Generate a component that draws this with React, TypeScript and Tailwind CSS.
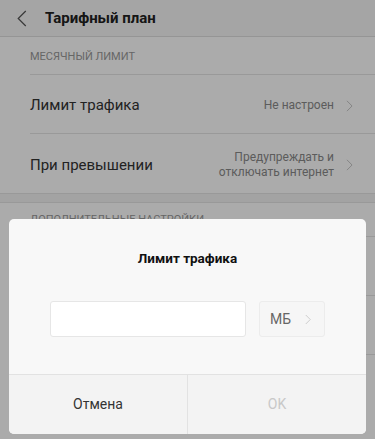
import React from 'react';

function ChevronRight({ className }: { className?: string }) {
  return (
    <svg viewBox="0 0 8 14" className={className} fill="none" stroke="currentColor" strokeWidth="1.1">
      <path d="M1 1l6 6-6 6" />
    </svg>
  );
}

function SettingRow({ label, value, last }: { label: string; value: React.ReactNode; last?: boolean }) {
  return (
    <div className={last ? 'flex h-[59px] items-center pr-[22px] pt-[3px]' : 'flex h-[59px] items-center border-b border-[#e4e4e4] pr-[22px] pt-[3px]'}>
      <span className="flex-1 text-[15px] text-[#333]">{label}</span>
      <span className="text-right text-[12px] leading-[15px] text-[#8a8a8a]">{value}</span>
      <ChevronRight className="ml-[12px] h-[12px] w-[7px] text-[#c4c4c4]" />
    </div>
  );
}

export default function App() {
  return (
    <div
      className="relative h-[439px] w-[375px] overflow-hidden bg-white"
      style={{ fontFamily: 'Roboto, "Noto Sans", sans-serif' }}
    >
      {/* page behind the dialog */}
      <div className="flex h-[37px] items-center border-b border-[#dedede] bg-[#f7f7f7]">
        <svg viewBox="0 0 10 18" className="ml-[17px] h-[17px] w-[10px] text-[#555]" fill="none" stroke="currentColor" strokeWidth="1.3">
          <path d="M9 1L1 9l8 8" />
        </svg>
        <span className="ml-[18px] text-[15px] font-bold text-[#222]">Тарифный план</span>
      </div>

      <div className="pl-[30px]">
        <div className="flex h-[38px] items-end border-b border-[#e4e4e4] pb-[9px] text-[11px] text-[#999]">
          МЕСЯЧНЫЙ ЛИМИТ
        </div>
        <SettingRow label="Лимит трафика" value="Не настроен" />
        <SettingRow
          last
          label="При превышении"
          value={
            <>
              Предупреждать и
              <br />
              отключать интернет
            </>
          }
        />
      </div>
      <div className="h-[10px] border-y border-[#e4e4e4] bg-[#f3f3f3]" />
      <div className="pl-[30px]">
        <div className="flex h-[34px] items-end border-b border-[#e4e4e4] pb-[8px] text-[11px] text-[#999]">
          ДОПОЛНИТЕЛЬНЫЕ НАСТРОЙКИ
        </div>
        <SettingRow label="Напоминание" value="Выкл." />
        <SettingRow label="Дата сброса" value="1 число" />
      </div>

      {/* dimmed overlay with dialog */}
      <div className="absolute inset-0 flex items-end bg-black/[0.33] px-[9px] pb-[5px]">
        <div className="w-full overflow-hidden rounded-[5px] bg-[#f8f8f8]">
          <div className="pt-[29px] text-center text-[13.5px] font-bold text-[#111]">Лимит трафика</div>
          <div className="mt-[33px] flex gap-[13px] px-[41px] pb-[37px]">
            <div className="h-[36px] w-[196px] rounded-[3px] border border-[#e6e6e6] bg-white" />
            <div className="flex h-[36px] w-[66px] items-center rounded-[3px] border border-[#ececec] bg-[#f6f6f6] pl-[10px]">
              <span className="text-[14px] text-[#666]">МБ</span>
              <ChevronRight className="ml-[14px] h-[11px] w-[6px] text-[#c4c4c4]" />
            </div>
          </div>
          <div className="flex h-[60px] border-t border-[#e2e2e2] bg-[#f3f3f3]">
            <button className="flex-1 border-r border-[#e2e2e2] text-[14px] text-[#333]">Отмена</button>
            <button className="flex-1 text-[14px] text-[#c8c8c8]">OK</button>
          </div>
        </div>
      </div>
    </div>
  );
}
